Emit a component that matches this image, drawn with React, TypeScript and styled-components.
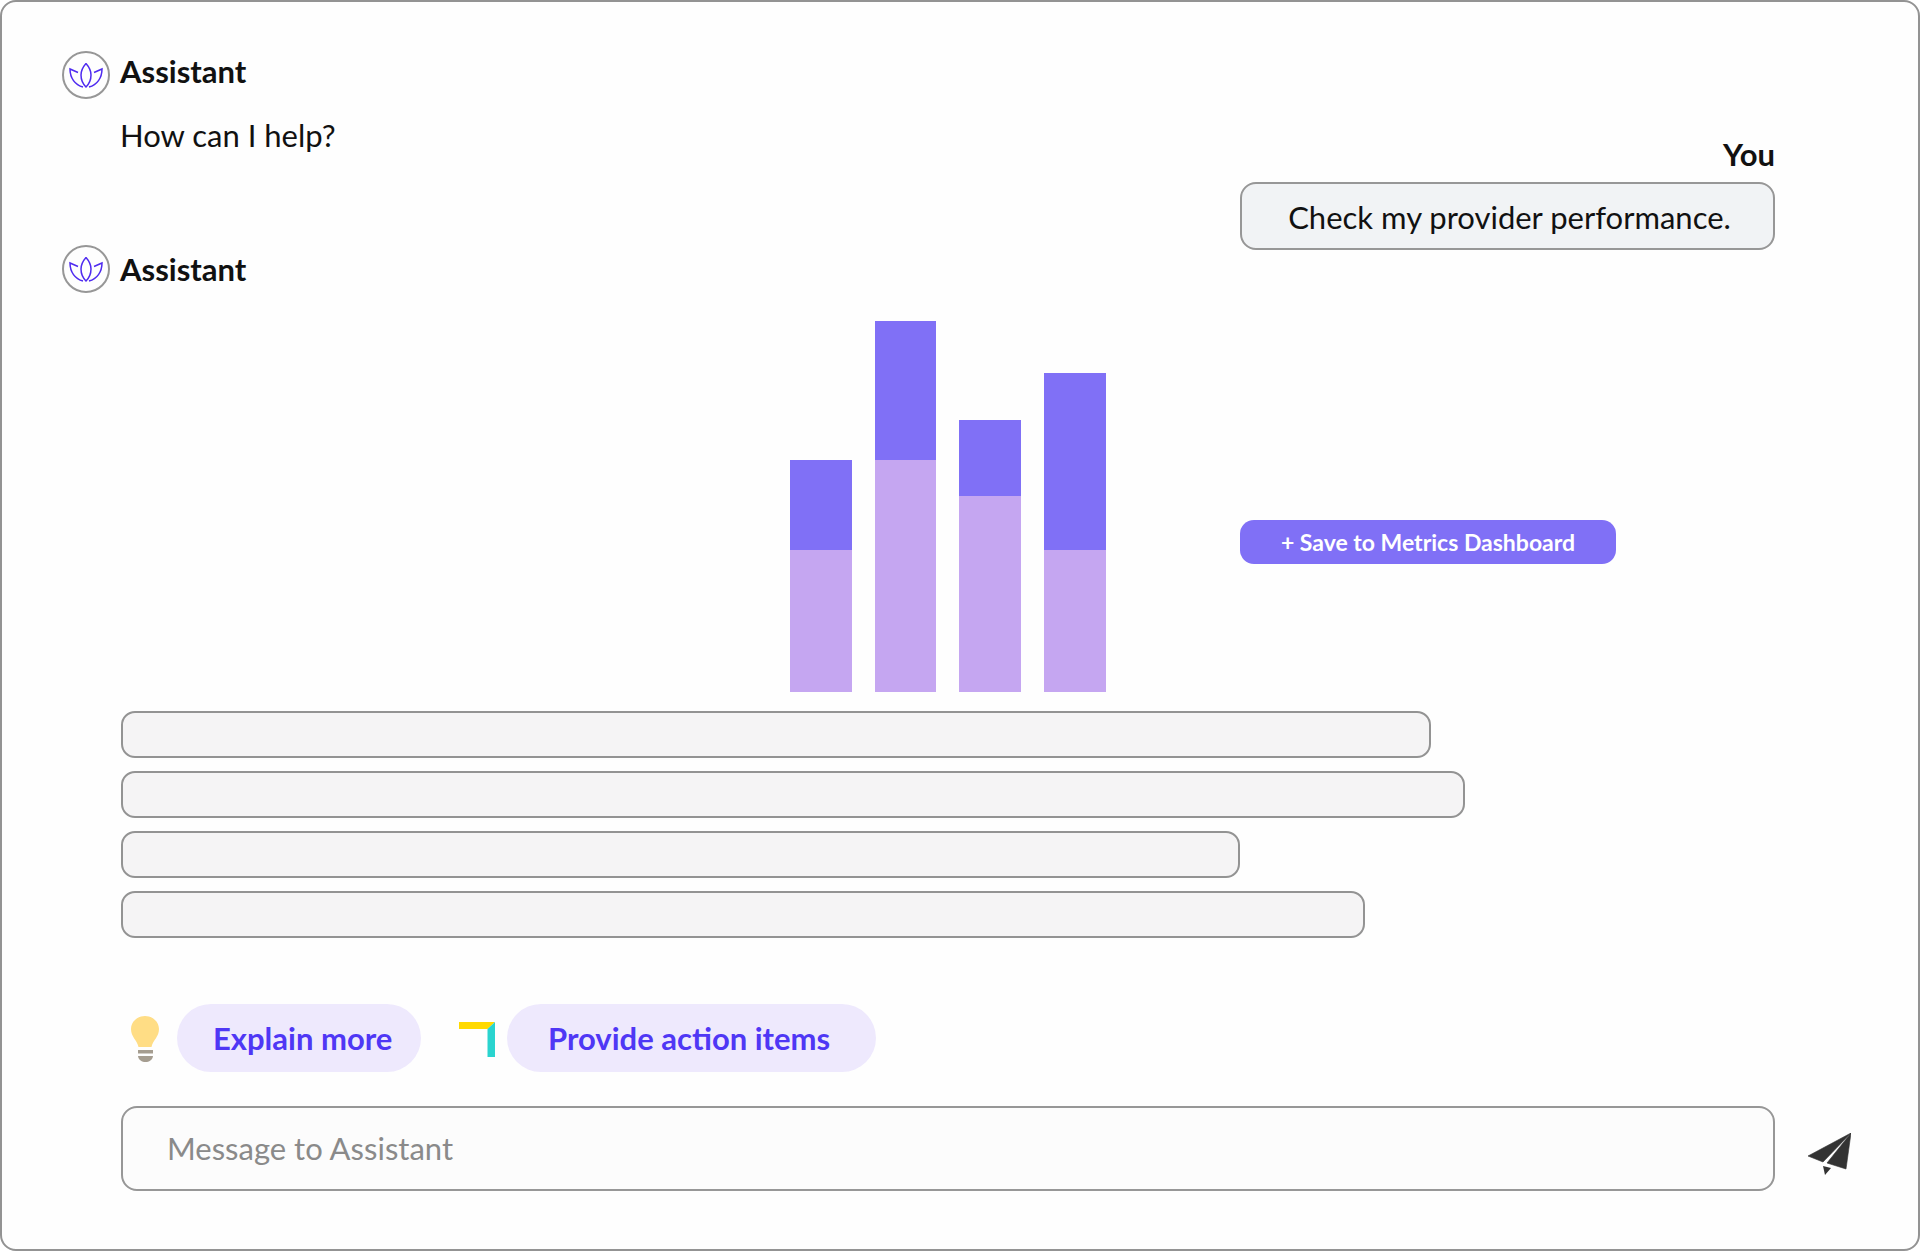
import styled, { createGlobalStyle } from "styled-components";

const GlobalStyle = createGlobalStyle`
  html, body {
    margin: 0;
    padding: 0;
    background: #ffffff;
  }
  body {
    font-family: "Lato", "Liberation Sans", sans-serif;
    color: #111111;
    text-rendering: optimizeLegibility;
  }
`;

const Frame = styled.div`
  box-sizing: border-box;
  width: 1920px;
  height: 1251px;
  border: 2px solid #939393;
  border-radius: 16px;
  background: #fefefe;
  padding: 49px 60px 0 60px;
  display: flex;
  flex-direction: column;
`;

const TopRow = styled.div`
  display: flex;
  justify-content: space-between;
  height: 194px;
  margin-right: 83px;
`;

const AssistantBlock = styled.div`
  display: flex;
  flex-direction: column;
`;

const Header = styled.div`
  display: flex;
  align-items: center;
  gap: 10px;
`;

const Avatar = styled.div`
  box-sizing: border-box;
  width: 48px;
  height: 48px;
  border: 2px solid #979797;
  border-radius: 50%;
  display: flex;
  align-items: center;
  justify-content: center;
`;

const Name = styled.div<{ $lift?: number }>`
  font-size: 31px;
  font-weight: 700;
  line-height: 36px;
  margin-top: ${(p) => p.$lift ?? -3}px;
`;

const Greeting = styled.div`
  font-size: 31px;
  line-height: 36px;
  margin: 18px 0 0 58px;
`;

const UserBlock = styled.div`
  width: 535px;
  margin-top: 88px;
  display: flex;
  flex-direction: column;
  align-items: flex-end;
`;

const Bubble = styled.div`
  box-sizing: border-box;
  width: 100%;
  height: 68px;
  margin-top: 10px;
  padding-left: 4px;
  background: #f1f3f5;
  border: 2px solid #979797;
  border-radius: 16px;
  font-size: 31px;
  line-height: 66px;
  text-align: center;
`;

const ChartRow = styled.div`
  margin: 28px 0 0 728px;
  display: flex;
  align-items: flex-start;
  height: 371px;
`;

const Chart = styled.div`
  display: flex;
  align-items: flex-end;
  gap: 23.2px;
  height: 100%;
  width: 450px;
`;

const Bar = styled.div`
  width: 61.5px;
  display: flex;
  flex-direction: column;
`;

const BarTop = styled.div<{ $h: number }>`
  height: ${(p) => p.$h}px;
  background: #8070f6;
`;

const BarBottom = styled.div<{ $h: number }>`
  height: ${(p) => p.$h}px;
  background: #c5a6f1;
`;

const SaveButton = styled.div`
  width: 376px;
  height: 44px;
  margin-top: 199px;
  border-radius: 14px;
  background: #8070f6;
  color: #ffffff;
  font-size: 23px;
  font-weight: 700;
  line-height: 44px;
  text-align: center;
`;

const Skeletons = styled.div`
  margin: 19px 0 0 59px;
  display: flex;
  flex-direction: column;
  gap: 13px;
`;

const Skeleton = styled.div<{ $w: number }>`
  box-sizing: border-box;
  width: ${(p) => p.$w}px;
  height: 47px;
  background: #f5f4f5;
  border: 2px solid #939393;
  border-radius: 14px;
`;

const Suggestions = styled.div`
  margin: 66px 0 0 69px;
  display: flex;
  align-items: center;
`;

const Chip = styled.div<{ $w: number; $pad: number }>`
  box-sizing: border-box;
  width: ${(p) => p.$w}px;
  height: 68px;
  padding-left: ${(p) => p.$pad}px;
  border-radius: 34px;
  background: #eee9fd;
  color: #4f37f5;
  font-size: 31px;
  font-weight: 700;
  line-height: 68px;
  white-space: nowrap;
`;

const BulbIcon = styled.svg`
  width: 28px;
  height: 46px;
  margin: 2px 18px 0 0;
`;

const CornerIcon = styled.svg`
  width: 36px;
  height: 35px;
  margin: 3px 12px 0 38px;
`;

const InputRow = styled.div`
  margin: 34px 0 0 59px;
  display: flex;
  align-items: center;
`;

const MessageBox = styled.div`
  box-sizing: border-box;
  flex: none;
  width: 1654px;
  height: 85px;
  background: #fcfcfc;
  border: 2px solid #979797;
  border-radius: 16px;
  padding-left: 44px;
  color: #8a8a8a;
  font-size: 31px;
  line-height: 81px;
`;

const SendIcon = styled.svg`
  flex: none;
  width: 43px;
  height: 42px;
  margin: 11px 0 0 33px;
`;

const Lotus = () => (
  <svg width="34" height="25" viewBox="0 0 34 25" fill="none" stroke="#4f2bf0" strokeWidth="1.5">
    <path d="M17 .5 C13 5 12 9 12 12 C12 16 14 21 17 24 C20 21 22 16 22 12 C22 9 21 5 17 .5 Z" />
    <path d="M9 9.5 L1 6 C1 15 6 22 14 24" />
    <path d="M25 9.5 L33 6 C33 15 28 22 20 24" />
  </svg>
);

const bars = [
  { top: 90, bottom: 142 },
  { top: 139, bottom: 232 },
  { top: 76, bottom: 196 },
  { top: 177, bottom: 142 },
];

const rows = [1310, 1344, 1119, 1244];

export default function App() {
  return (
    <Frame>
      <GlobalStyle />
      <TopRow>
        <AssistantBlock>
          <Header>
            <Avatar>
              <Lotus />
            </Avatar>
            <Name $lift={-8}>Assistant</Name>
          </Header>
          <Greeting>How can I help?</Greeting>
        </AssistantBlock>
        <UserBlock>
          <Name>You</Name>
          <Bubble>Check my provider performance.</Bubble>
        </UserBlock>
      </TopRow>
      <Header>
        <Avatar>
          <Lotus />
        </Avatar>
        <Name $lift={-1}>Assistant</Name>
      </Header>
      <ChartRow>
        <Chart>
          {bars.map((b, i) => (
            <Bar key={i}>
              <BarTop $h={b.top} />
              <BarBottom $h={b.bottom} />
            </Bar>
          ))}
        </Chart>
        <SaveButton>+ Save to Metrics Dashboard</SaveButton>
      </ChartRow>
      <Skeletons>
        {rows.map((w) => (
          <Skeleton key={w} $w={w} />
        ))}
      </Skeletons>
      <Suggestions>
        <BulbIcon viewBox="0 0 28 46">
          <path
            d="M14 0 C6 0 0 6 0 13 C0 21 6 24 7.5 31 L20.5 31 C22 24 28 21 28 13 C28 6 22 0 14 0 Z"
            fill="#ffdd85"
          />
          <rect x="7" y="34" width="15" height="3.5" fill="#a59d90" />
          <path d="M7 40 H22 C21.5 44 18 46 14.5 46 C11 46 7.5 44 7 40 Z" fill="#a59d90" />
        </BulbIcon>
        <Chip $w={244} $pad={36}>Explain more</Chip>
        <CornerIcon viewBox="0 0 36 35">
          <path d="M0 0 H36 L28.5 7 H0 Z" fill="#ffd900" />
          <path d="M36 0 V35 H28.5 V7 Z" fill="#2ad4cf" />
        </CornerIcon>
        <Chip $w={369} $pad={41}>Provide action items</Chip>
      </Suggestions>
      <InputRow>
        <MessageBox>Message to Assistant</MessageBox>
        <SendIcon viewBox="0 0 43 42">
          <path d="M0 23 L43 0 L15 29 Z" fill="#333333" stroke="#333333" strokeLinejoin="round" strokeWidth="0.6" />
          <path d="M43 0 L38 36 L19 30 Z" fill="#333333" stroke="#333333" strokeLinejoin="round" strokeWidth="0.6" />
          <path d="M15 33 L23 35 L17 42 Z" fill="#333333" />
        </SendIcon>
      </InputRow>
    </Frame>
  );
}
